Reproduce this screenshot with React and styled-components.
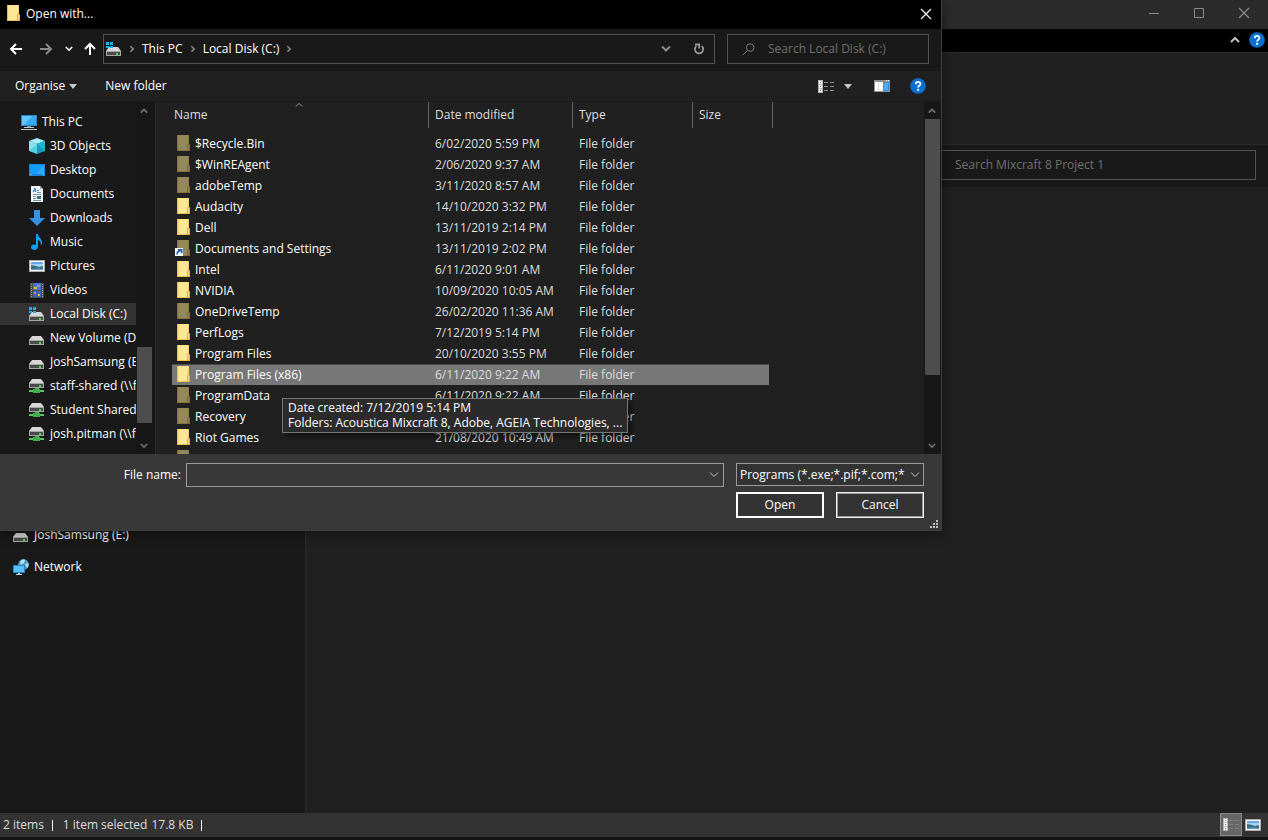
import React from 'react';
import styled, { createGlobalStyle, css } from 'styled-components';

const GlobalStyle = createGlobalStyle`
  * {
    box-sizing: border-box;
  }

  body {
    margin: 0;
    background: #191919;
    color: #fff;
    font-family: 'Open Sans', 'Noto Sans', sans-serif;
    font-size: 12px;
    line-height: 16px;
  }

  button, input, select {
    font: inherit;
    color: inherit;
  }

  svg {
    display: block;
    flex-shrink: 0;
  }
`;

/* ---------- icons ---------- */

const Chevron = ({ dir = 'down', size = 8, color = '#8a8a8a', weight = 2 }) => {
  const paths = {
    down: 'M1 2.5 L5 6.5 L9 2.5',
    up: 'M1 7 L5 3 L9 7',
    right: 'M3 1.5 L6.5 5 L3 8.5',
  };
  return (
    <svg width={size} height={size} viewBox="0 0 10 10" fill="none" stroke={color} strokeWidth={weight}>
      <path d={paths[dir]} />
    </svg>
  );
};

const Arrow = ({ angle = 0, color = '#fff' }) => (
  <svg width="14" height="14" viewBox="0 0 14 14" fill="none" stroke={color} strokeWidth="2">
    <g transform={`rotate(${angle} 7 7)`}>
      <path d="M13 7H2M7 2L2 7l5 5" />
    </g>
  </svg>
);

const Triangle = () => (
  <svg width="8" height="5" viewBox="0 0 8 5">
    <path d="M0 0h8L4 5z" fill="#c8c8c8" />
  </svg>
);

const CloseIcon = ({ color = '#fff' }) => (
  <svg width="12" height="12" viewBox="0 0 12 12" stroke={color} strokeWidth="1.2">
    <path d="M1 1l10 10M11 1L1 11" />
  </svg>
);

const MinimiseIcon = () => (
  <svg width="10" height="10" viewBox="0 0 10 10">
    <path d="M0 5h10v1H0z" fill="#8a8a8a" />
  </svg>
);

const MaximiseIcon = () => (
  <svg width="10" height="10" viewBox="0 0 10 10">
    <path d="M.5.5h9v9h-9z" fill="none" stroke="#8a8a8a" />
  </svg>
);

const HelpIcon = () => (
  <svg width="16" height="16" viewBox="0 0 16 16">
    <circle cx="8" cy="8" r="7.8" fill="#0a6fd0" />
    <path d="M5.8 6.2c0-3 4.6-3 4.6-.3 0 1.7-2.3 1.7-2.3 3.6" fill="none" stroke="#fff" strokeWidth="1.8" />
    <path d="M7.1 10.8h2v2h-2z" fill="#fff" />
  </svg>
);

const SearchIcon = () => (
  <svg width="13" height="13" viewBox="0 0 13 13" fill="none" stroke="#7d7d7d">
    <circle cx="8.2" cy="4.6" r="3.8" />
    <path d="M5.5 7.4L.7 12.2" />
  </svg>
);

const RefreshIcon = () => (
  <svg width="12" height="12" viewBox="0 0 12 12" fill="none" stroke="#9a9a9a" strokeWidth="1.8">
    <path d="M8.8 3.2A4.1 4.1 0 1 1 3.3 3.2" />
    <path d="M2 1.500h4.200v4" />
  </svg>
);

const FolderIcon = ({ faded, shortcut }) => (
  <svg width="18" height="18" viewBox="-2 0 18 18">
    <g opacity={faded ? 0.52 : 1}>
      <path d="M0 0h12v16H0z" fill="#ffe084" />
      <path d="M2 1h10v9l-2 5H2z" fill="#ffe799" />
      <path d="M0 0h1v16H0z" fill="#e8bd44" />
      <path d="M0 15h13v1H0z" fill="#ecc355" />
      <path d="M11 0h1v9h-1z" fill="#f2cf6b" />
      <path d="M10.5 9.5h2v6h-2z" fill="#ffdf80" stroke="#e0b23b" />
    </g>
    {shortcut && (
      <g>
        <path d="M-2 8h8v8h-8z" fill="#f4f4f4" />
        <path d="M0 14.5c0-2.500 1-3.500 3.500-3.500M1 9.700h3.700v3.600" fill="none" stroke="#1c5fae" strokeWidth="1.500" />
      </g>
    )}
  </svg>
);

const DriveBody = ({ y = 0 }) => (
  <g transform={`translate(0 ${y})`}>
    <path d="M3 0h9l3 4H0z" fill="#d7d7d7" />
    <path d="M0 4h15v5H0z" fill="#a7a7a7" />
    <path d="M1 5h13v3H1z" fill="#4a4a4a" />
    <path d="M10 6h2v2h-2z" fill="#3ee04b" />
  </g>
);

const DriveIcon = ({ system, network }) => (
  <svg width="16" height="16" viewBox="0 0 16 16">
    <DriveBody y={network ? 1 : 6} />
    {system && <path d="M-1 1h3v3h-3zM3 1h3v3H3zM-1 5h3v2h-3zM3 5h3v2H3z" fill="#14b4f0" transform="translate(1 0)" />}
    {network && (
      <g>
        <path d="M6 10h4v2H6z" fill="#3fae49" />
        <path d="M0 12h15v2H0z" fill="#56c45e" />
        <path d="M4 11h7v4H4z" fill="#3fae49" />
      </g>
    )}
  </svg>
);

const PcIcon = () => (
  <svg width="16" height="16" viewBox="0 0 16 16">
    <path d="M0 1h16v11H0z" fill="#2b86bd" />
    <path d="M1 2h14v9H1z" fill="#35aaf5" />
    <path d="M1 2h10L3 11H1z" fill="#66c6ff" />
    <path d="M6 12h4v2H6z" fill="#6d8ba0" />
    <path d="M3 13h10v1H3zM0 15h16v1H0z" fill="#b8cad6" />
  </svg>
);

const CubeIcon = () => (
  <svg width="16" height="16" viewBox="0 0 16 16">
    <path d="M8 0l8 3-8 3-8-3z" fill="#a7edf4" />
    <path d="M0 3l8 3v10l-8-3z" fill="#56cfdf" />
    <path d="M16 3L8 6v10l8-3z" fill="#149fc0" />
    <path d="M0 3l8 3-8 7z" fill="#8be3ec" />
    <path d="M16 3v10L8 6z" fill="#22b5d2" />
  </svg>
);

const DesktopIcon = () => (
  <svg width="16" height="16" viewBox="0 0 16 16">
    <path d="M0 2h16v12H0z" fill="#1c84d8" />
    <path d="M1 3h14v9H1z" fill="#119dfb" />
    <path d="M15 3v9H6z" fill="#2baaff" />
    <path d="M1 12h1v1H1zM14 12h1v1h-1z" fill="#fff" />
  </svg>
);

const DocumentIcon = () => (
  <svg width="16" height="16" viewBox="0 0 16 16">
    <path d="M2 0h9l3 3v13H2z" fill="#f5f5f5" />
    <path d="M11 0v3h3z" fill="#a9a9a9" />
    <path d="M4 6l2-4 1 4M4.500 5h2" fill="none" stroke="#2f83c9" />
    <path d="M8 4h2v1H8zM8 6h4v1H8zM4 8h8v1H4zM4 10h3v1H4zM4 12h3v1H4zM4 14h8v1H4z" fill="#7193ad" />
    <path d="M8 10h4v3H8z" fill="#35719c" />
  </svg>
);

const DownloadIcon = () => (
  <svg width="16" height="16" viewBox="0 0 16 16">
    <path d="M5 0h6v8h5l-8 8-8-8h5z" fill="#3391e6" />
  </svg>
);

const MusicIcon = () => (
  <svg width="16" height="16" viewBox="0 0 16 16">
    <path d="M7 0h2c0 4 4.500 4 4 9.500-.2 1-.8 1.500-1.300 2 .5-3-.7-4.500-2.700-5.500v6.500C9 17 2 17 2 13.200 2 10.700 5 10 7 11z" fill="#139cf5" />
  </svg>
);

const PictureIcon = () => (
  <svg width="16" height="16" viewBox="0 0 16 16">
    <path d="M0 2h16v12H0z" fill="#a9a9a9" />
    <path d="M1 3h14v10H1z" fill="#fff" />
    <path d="M2 4h12v8H2z" fill="#a9d3f2" />
    <path d="M2 4h12v2H2z" fill="#6ba5e4" />
    <path d="M2 7l5 1 3 1 4-1v4H2z" fill="#376f77" />
    <path d="M2 11l7-1 5 1v1H2z" fill="#5d8ec0" />
  </svg>
);

const VideoIcon = () => (
  <svg width="16" height="16" viewBox="0 0 16 16">
    <path d="M1 1h14v15H1z" fill="#4a4a4a" />
    <path d="M4 1h8v7H4z" fill="#3c78d8" />
    <path d="M4 9h8v6H4z" fill="#3567bd" />
    <path d="M5 5h3v2H5zM9 12h2v2H9z" fill="#e4b73d" />
    <path d="M8 3h3v2H8zM5 10h2v2H5z" fill="#c47d9e" />
    <path d="M2.5 2v13M13.5 2v13" stroke="#9a9a9a" strokeWidth="1" strokeDasharray="1 1" />
  </svg>
);

const NetworkIcon = () => (
  <svg width="16" height="16" viewBox="0 0 16 16">
    <circle cx="10.5" cy="5.5" r="5.4" fill="#4d9cc3" />
    <path d="M7 3c1-2 3-3 5-2l-1 3-3 2zM12 5l3-1c1 2 0 4-1 5z" fill="#b4e0ef" />
    <path d="M0 6h12v8H0z" fill="#2685c6" />
    <path d="M1 7h10v6H1z" fill="#59bfff" />
    <path d="M5 14h2v1h2v1H3v-1h2z" fill="#c1d5e0" />
  </svg>
);

const DetailsIcon = ({ line = '#8b8b8b' }) => (
  <svg width="17" height="13" viewBox="0 0 17 13">
    <path d="M0 0h5v13H0z" fill="#b5b5b5" />
    <path d="M1 1h3v3H1zM1 5h3v3H1zM1 9h3v3H1z" fill="#fff" />
    <path d="M2 2h1v1H2z" fill="#3e8d56" />
    <path d="M2 6h1v1H2z" fill="#2868d8" />
    <path d="M2 10h1v1H2z" fill="#c92b2b" />
    <path d="M6 2h4v1H6zM12 2h4v1h-4zM6 6h4v1H6zM12 6h4v1h-4zM6 10h4v1H6zM12 10h4v1h-4z" fill={line} />
  </svg>
);

const PreviewPaneIcon = () => (
  <svg width="16" height="12" viewBox="0 0 16 12">
    <path d="M0 0h16v12H0z" fill="#8d9499" />
    <path d="M1 2h3v9H1zM5 2h4v9H5z" fill="#fff" />
    <path d="M4 2h1v9H4z" fill="#d5dadd" />
    <path d="M9 2h6v9H9z" fill="#2f8fe0" />
    <path d="M10 3h4v7h-4z" fill="#55abef" />
    <path d="M12 0h1v1h-1zM14 0h1v1h-1z" fill="#fff" />
  </svg>
);

const GripIcon = () => (
  <svg width="8" height="8" viewBox="0 0 8 8">
    <path d="M6 0h2v2H6zM3 3h2v2H3zM6 3h2v2H6zM0 6h2v2H0zM3 6h2v2H3zM6 6h2v2H6z" fill="#bfbfbf" />
  </svg>
);

/* ---------- shared parts ---------- */

const IconButton = styled.button`
  display: flex;
  align-items: center;
  justify-content: center;
  width: ${props => props.$width || 24}px;
  height: ${props => props.$height || 24}px;
  padding: 0;
  border: ${props => (props.$pressed ? '1px solid #8a8a8a' : 'none')};
  background: ${props => (props.$pressed ? '#666' : 'none')};
  flex-shrink: 0;
`;

const TreeList = styled.ul`
  list-style: none;
  margin: 0;
  padding: 0;

  li {
    padding: 1px 0;
  }
`;

const TreeLink = styled.a`
  display: flex;
  align-items: center;
  gap: 5px;
  height: 22px;
  padding-left: ${props => props.$indent}px;
  color: #fff;
  text-decoration: none;
  white-space: nowrap;
  overflow: hidden;
  background: ${props => (props.$selected ? '#333' : 'transparent')};
`;

const ScrollRail = styled.div`
  display: flex;
  flex-direction: column;
  width: 17px;
  flex-shrink: 0;
  background: #171717;
`;

const ScrollSpace = styled.div`
  flex: ${props => props.$share} 0 0;
`;

const ScrollThumb = styled.div`
  flex: ${props => props.$share} 0 0;
  margin: 0 1px;
  background: #4d4d4d;
`;

const ScrollBar = ({ before, thumb, after }) => (
  <ScrollRail>
    <IconButton $width={16} $height={17} aria-label="Scroll up">
      <Chevron dir="up" color="#757575" />
    </IconButton>
    <ScrollSpace $share={before} />
    <ScrollThumb $share={thumb} />
    <ScrollSpace $share={after} />
    <IconButton $width={16} $height={17} aria-label="Scroll down">
      <Chevron color="#757575" />
    </IconButton>
  </ScrollRail>
);

/* ---------- explorer window behind ---------- */

const Explorer = styled.main`
  display: flex;
  flex-direction: column;
  min-height: 100vh;
  padding-bottom: 3px;
  background: #151313;
`;

const ExplorerTitle = styled.header`
  display: flex;
  justify-content: flex-end;
  height: 29px;
  padding-right: 1px;
  background: #2b2b2b;
`;

const RibbonTabs = styled.div`
  display: flex;
  align-items: center;
  justify-content: flex-end;
  height: 23px;
  padding: 0 2px 1px 0;
  background: #000;
`;

const Ribbon = styled.div`
  height: 93px;
  background: #202020;
  border-top: 1px solid #2b2b2b;
  border-bottom: 1px solid #2b2b2b;
`;

const ExplorerAddress = styled.div`
  display: flex;
  justify-content: flex-end;
  padding: 5px 12px 7px;
  background: #191919;
`;

const ExplorerSearch = styled.input`
  width: 340px;
  height: 30px;
  padding: 0 8px 1px 38px;
  border: 1px solid #535353;
  background: #191919;

  &::placeholder {
    color: #707070;
    opacity: 1;
  }
`;

const ExplorerBody = styled.div`
  display: flex;
  flex: 1;
  background: #202020;
`;

const ExplorerTree = styled.nav`
  width: 306px;
  padding-top: 336px;
  background: #191919;
  border-right: 1px solid #2b2b2b;

  li {
    margin-bottom: 8px;
  }
`;

const StatusBar = styled.footer`
  display: flex;
  align-items: center;
  height: 24px;
  padding: 0 4px 0 3px;
  background: #333;
  color: #dedede;
`;

const StatusText = styled.span`
  margin-right: ${props => props.$after}px;
`;

const StatusRule = styled.span`
  width: 1px;
  height: 11px;
  margin-right: 10px;
  background: #fff;
`;

const StatusViews = styled.div`
  display: flex;
  align-self: flex-start;
  margin-left: auto;
`;

/* ---------- dialog ---------- */

const Dialog = styled.section`
  position: absolute;
  top: 0;
  left: 0;
  display: flex;
  flex-direction: column;
  width: calc(100% - 326px);
  height: calc(100vh - 309px);
  min-height: 320px;
  background: #202020;
  border-right: 1px solid #3f3f3f;
  border-bottom: 1px solid #3f3f3f;
  box-shadow: 0 2px 12px rgba(0, 0, 0, 0.45);
`;

const DialogTitle = styled.header`
  display: flex;
  align-items: center;
  height: 29px;
  padding: 0 3px 2px 5px;
  background: #000;
`;

const DialogHeading = styled.h1`
  flex: 1;
  margin: 0 0 0 3px;
  font-size: 12px;
  font-weight: 400;
`;

const NavRow = styled.div`
  display: flex;
  align-items: center;
  height: 42px;
  padding: 0 12px 2px 4px;
  background: #191919;
`;

const NavButtons = styled.div`
  display: flex;
  width: 99px;
  gap: 6px;
  flex-shrink: 0;

  button:nth-child(n + 3) {
    margin-left: -1px;
  }
`;

const AddressBar = styled.div`
  display: flex;
  align-items: center;
  flex: 1;
  height: 30px;
  padding-left: 2px;
  border: 1px solid #535353;
`;

const Crumb = styled.a`
  color: #fff;
  text-decoration: none;
  white-space: nowrap;
`;

const AddressActions = styled.div`
  display: flex;
  margin-left: auto;
`;

const SearchBox = styled.label`
  display: flex;
  align-items: center;
  gap: 13px;
  width: 202px;
  height: 30px;
  margin-left: 12px;
  padding-left: 14px;
  border: 1px solid #535353;
`;

const SearchInput = styled.input`
  flex: 1;
  min-width: 0;
  padding: 0;
  border: none;
  background: none;
  outline: none;

  &::placeholder {
    color: #707070;
    opacity: 1;
  }
`;

const Toolbar = styled.div`
  display: flex;
  align-items: center;
  height: 31px;
  padding: 0 12px 0 15px;
  background: #202020;
  border-bottom: 1px solid #191919;
`;

const ToolButton = styled.button`
  display: flex;
  align-items: center;
  gap: 4px;
  padding: 0;
  margin-right: 28px;
  border: none;
  background: none;
`;

const ToolbarRight = styled.div`
  display: flex;
  align-items: center;
  margin-left: auto;
`;

const DialogBody = styled.div`
  display: flex;
  flex: 1;
  min-height: 0;
`;

const DialogTree = styled.nav`
  display: flex;
  width: 156px;
  flex-shrink: 0;
  overflow: hidden;
  background: #191919;
  border-right: 1px solid #2b2b2b;

  ul {
    width: 136px;
    padding-top: 8px;
  }
`;

const FilePane = styled.div`
  position: relative;
  flex: 1;
  min-width: 0;
  padding-left: 16px;
  overflow: hidden;
`;

const FileTable = styled.table`
  table-layout: fixed;
  width: 601px;
  border-collapse: separate;
  border-spacing: 0;

  tbody::before {
    content: '';
    display: block;
    height: 5px;
  }
`;

const HeadCell = styled.th`
  position: relative;
  width: ${props => props.$width}px;
  height: 26px;
  padding: 0 0 0 ${props => props.$pad || 6}px;
  border-right: 1px solid #636363;
  color: #dedede;
  font-weight: 400;
  text-align: left;
`;

const SortMark = styled.span`
  position: absolute;
  top: -1px;
  left: 48%;
`;

const FileRow = styled.tr`
  td {
    height: 21px;
    padding: 0 0 0 6px;
    color: #dedede;
    white-space: nowrap;
  }

  td:first-child {
    padding-left: 3px;
    color: #fff;
  }

  td:last-child {
    border-right: 4px solid transparent;
    background-clip: padding-box;
  }

  ${props => props.$selected && css`
    td {
      background-color: #777;
      box-shadow: inset 0 1px #4a4a4a;
    }
  `}
`;

const FileName = styled.div`
  display: flex;
  align-items: center;
  gap: 2px;
`;

const Tooltip = styled.div`
  position: absolute;
  top: 296px;
  left: 126px;
  padding: 1px 5px 2px;
  border: 1px solid #767676;
  background: #2b2b2b;
  box-shadow: 4px 4px 4px rgba(0, 0, 0, 0.4);
  line-height: 15px;
  white-space: nowrap;
`;

const DialogFooter = styled.form`
  position: relative;
  padding: 9px 17px 12px 0;
  background: #383838;
`;

const FieldRow = styled.div`
  display: flex;
  align-items: flex-start;
  margin-bottom: 5px;
`;

const FieldLabel = styled.label`
  width: 186px;
  padding-right: 5px;
  line-height: 24px;
  text-align: right;
`;

const ComboBox = styled.div`
  display: flex;
  flex: 1;
  height: 24px;
  margin-right: 12px;
  border: 1px solid #9b9b9b;
`;

const ComboInput = styled.input`
  flex: 1;
  min-width: 0;
  padding: 0 3px;
  border: none;
  background: none;
  outline: none;
`;

const SelectBox = styled.div`
  position: relative;
  width: 188px;

  svg {
    position: absolute;
    top: 7px;
    right: 4px;
    pointer-events: none;
  }
`;

const TypeSelect = styled.select`
  appearance: none;
  display: block;
  width: 100%;
  height: 23px;
  padding: 0 18px 0 3px;
  border: 1px solid #9b9b9b;
  border-radius: 0;
  background: #333;
  text-overflow: clip;
`;

const ButtonRow = styled.div`
  display: flex;
  justify-content: flex-end;
  gap: 12px;
`;

const DialogButton = styled.button`
  width: 88px;
  height: 26px;
  padding: 0;
  border: ${props => (props.$primary ? '2px solid #fff' : '1px solid #f0f0f0')};
  box-shadow: ${props => (props.$primary ? 'none' : 'inset 0 0 0 1px #9b9b9b')};
  background: #333;
`;

const ResizeGrip = styled.span`
  position: absolute;
  right: 3px;
  bottom: 2px;
`;

/* ---------- data ---------- */

const places = [
  { name: 'This PC', icon: <PcIcon />, root: true },
  { name: '3D Objects', icon: <CubeIcon /> },
  { name: 'Desktop', icon: <DesktopIcon /> },
  { name: 'Documents', icon: <DocumentIcon /> },
  { name: 'Downloads', icon: <DownloadIcon /> },
  { name: 'Music', icon: <MusicIcon /> },
  { name: 'Pictures', icon: <PictureIcon /> },
  { name: 'Videos', icon: <VideoIcon /> },
  { name: 'Local Disk (C:)', icon: <DriveIcon system />, selected: true },
  { name: 'New Volume (D:)', icon: <DriveIcon /> },
  { name: 'JoshSamsung (E:)', icon: <DriveIcon /> },
  { name: 'staff-shared (\\\\fi', icon: <DriveIcon network /> },
  { name: 'Student Shared (', icon: <DriveIcon network /> },
  { name: 'josh.pitman (\\\\fi', icon: <DriveIcon network /> },
];

const files = [
  { name: '$Recycle.Bin', date: '6/02/2020 5:59 PM', hidden: true },
  { name: '$WinREAgent', date: '2/06/2020 9:37 AM', hidden: true },
  { name: 'adobeTemp', date: '3/11/2020 8:57 AM', hidden: true },
  { name: 'Audacity', date: '14/10/2020 3:32 PM' },
  { name: 'Dell', date: '13/11/2019 2:14 PM' },
  { name: 'Documents and Settings', date: '13/11/2019 2:02 PM', hidden: true, shortcut: true },
  { name: 'Intel', date: '6/11/2020 9:01 AM' },
  { name: 'NVIDIA', date: '10/09/2020 10:05 AM' },
  { name: 'OneDriveTemp', date: '26/02/2020 11:36 AM', hidden: true },
  { name: 'PerfLogs', date: '7/12/2019 5:14 PM' },
  { name: 'Program Files', date: '20/10/2020 3:55 PM' },
  { name: 'Program Files (x86)', date: '6/11/2020 9:22 AM', selected: true },
  { name: 'ProgramData', date: '6/11/2020 9:22 AM', hidden: true },
  { name: 'Recovery', date: '', hidden: true },
  { name: 'Riot Games', date: '21/08/2020 10:49 AM' },
  { name: '', date: '', type: '', hidden: true },
];

const OpenWithDialog = () => (
  <Dialog role="dialog" aria-labelledby="dialog-title">
    <DialogTitle>
      <FolderIcon />
      <DialogHeading id="dialog-title">Open with...</DialogHeading>
      <IconButton aria-label="Close"><CloseIcon /></IconButton>
    </DialogTitle>

    <NavRow>
      <NavButtons>
        <IconButton aria-label="Back"><Arrow /></IconButton>
        <IconButton aria-label="Forward"><Arrow angle={180} color="#8a8a8a" /></IconButton>
        <IconButton $width={12} aria-label="Recent locations"><Chevron color="#fff" /></IconButton>
        <IconButton $width={20} aria-label="Up"><Arrow angle={90} /></IconButton>
      </NavButtons>
      <AddressBar>
        <DriveIcon system />
        <IconButton $width={20} aria-label="Browse root"><Chevron dir="right" /></IconButton>
        <Crumb href="#this-pc">This PC</Crumb>
        <IconButton $width={20} aria-label="Browse This PC"><Chevron dir="right" /></IconButton>
        <Crumb href="#local-disk">Local Disk (C:)</Crumb>
        <IconButton $width={20} aria-label="Browse Local Disk"><Chevron dir="right" /></IconButton>
        <AddressActions>
          <IconButton $width={34} aria-label="Previous locations"><Chevron size={10} /></IconButton>
          <IconButton $width={31} aria-label="Refresh"><RefreshIcon /></IconButton>
        </AddressActions>
      </AddressBar>
      <SearchBox>
        <SearchIcon />
        <SearchInput aria-label="Search Local Disk (C:)" placeholder="Search Local Disk (C:)" />
      </SearchBox>
    </NavRow>

    <Toolbar>
      <ToolButton>Organise <Triangle /></ToolButton>
      <ToolButton>New folder</ToolButton>
      <ToolbarRight>
        <IconButton $width={26} aria-label="Change your view"><DetailsIcon /></IconButton>
        <IconButton $width={18} aria-label="More view options"><Triangle /></IconButton>
        <IconButton $width={50} aria-label="Show the preview pane"><PreviewPaneIcon /></IconButton>
        <IconButton $width={22} aria-label="Help"><HelpIcon /></IconButton>
      </ToolbarRight>
    </Toolbar>

    <DialogBody>
      <DialogTree aria-label="Places">
        <TreeList>
          {places.map(place => (
            <li key={place.name}>
              <TreeLink href="#place" $indent={place.root ? 21 : 29} $selected={place.selected}>
                {place.icon}
                {place.name}
              </TreeLink>
            </li>
          ))}
        </TreeList>
        <ScrollBar before={228} thumb={76} after={14} />
      </DialogTree>

      <FilePane>
        <FileTable>
          <thead>
            <tr>
              <HeadCell $width={257} $pad={2}>
                Name
                <SortMark><Chevron dir="up" weight={1} color="#b0b0b0" /></SortMark>
              </HeadCell>
              <HeadCell $width={144}>Date modified</HeadCell>
              <HeadCell $width={120}>Type</HeadCell>
              <HeadCell $width={80}>Size</HeadCell>
            </tr>
          </thead>
          <tbody>
            {files.map((file, i) => (
              <FileRow key={i} $selected={file.selected}>
                <td>
                  <FileName>
                    <FolderIcon faded={file.hidden} shortcut={file.shortcut} />
                    {file.name}
                  </FileName>
                </td>
                <td>{file.date}</td>
                <td>{file.type ?? 'File folder'}</td>
                <td />
              </FileRow>
            ))}
          </tbody>
        </FileTable>
        <Tooltip role="tooltip">
          Date created: 7/12/2019 5:14 PM<br />
          Folders: Acoustica Mixcraft 8, Adobe, AGEIA Technologies, ...
        </Tooltip>
      </FilePane>
      <ScrollBar before={0} thumb={256} after={62} />
    </DialogBody>

    <DialogFooter onSubmit={e => e.preventDefault()}>
      <FieldRow>
        <FieldLabel htmlFor="file-name">File name:</FieldLabel>
        <ComboBox>
          <ComboInput id="file-name" type="text" />
          <IconButton type="button" $width={18} $height={22} aria-label="Recent file names">
            <Chevron size={10} weight={1} color="#c8c8c8" />
          </IconButton>
        </ComboBox>
        <SelectBox>
          <TypeSelect aria-label="File type">
            <option>Programs (*.exe;*.pif;*.com;*.bat;*.cmd)</option>
          </TypeSelect>
          <Chevron size={10} weight={1} color="#c8c8c8" />
        </SelectBox>
      </FieldRow>
      <ButtonRow>
        <DialogButton type="submit" $primary>Open</DialogButton>
        <DialogButton type="button">Cancel</DialogButton>
      </ButtonRow>
      <ResizeGrip><GripIcon /></ResizeGrip>
    </DialogFooter>
  </Dialog>
);

const App = () => (
  <>
    <GlobalStyle />
    <Explorer>
      <ExplorerTitle>
        <IconButton $width={45} $height={26} aria-label="Minimise"><MinimiseIcon /></IconButton>
        <IconButton $width={45} $height={26} aria-label="Maximise"><MaximiseIcon /></IconButton>
        <IconButton $width={46} $height={26} aria-label="Close window"><CloseIcon color="#8a8a8a" /></IconButton>
      </ExplorerTitle>
      <RibbonTabs>
        <IconButton $width={26} aria-label="Minimise the ribbon"><Chevron dir="up" size={10} color="#c0c0c0" /></IconButton>
        <IconButton $width={18} aria-label="Explorer help"><HelpIcon /></IconButton>
      </RibbonTabs>
      <Ribbon />
      <ExplorerAddress>
        <ExplorerSearch aria-label="Search Mixcraft 8 Project 1" placeholder="Search Mixcraft 8 Project 1" />
      </ExplorerAddress>
      <ExplorerBody>
        <ExplorerTree aria-label="Folders">
          <TreeList>
            <li><TreeLink href="#e" $indent={13}><DriveIcon />JoshSamsung (E:)</TreeLink></li>
            <li><TreeLink href="#network" $indent={13}><NetworkIcon />Network</TreeLink></li>
          </TreeList>
        </ExplorerTree>
      </ExplorerBody>
      <StatusBar>
        <StatusText $after={8}>2 items</StatusText>
        <StatusRule />
        <StatusText $after={4}>1 item selected</StatusText>
        <StatusText $after={8}>17.8 KB</StatusText>
        <StatusRule />
        <StatusViews>
          <IconButton $width={22} $height={23} $pressed aria-label="Details view"><DetailsIcon line="#808080" /></IconButton>
          <IconButton $width={22} $height={23} aria-label="Large icons view"><PictureIcon /></IconButton>
        </StatusViews>
      </StatusBar>
    </Explorer>
    <OpenWithDialog />
  </>
);

export default App;
